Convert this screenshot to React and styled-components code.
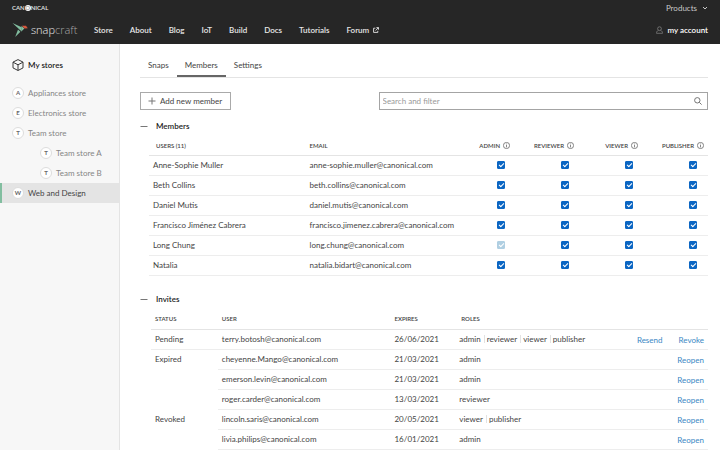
import React, { useState } from "react";
import styled, { createGlobalStyle } from "styled-components";

const colors = {
  dark: "#262626",
  text: "#444",
  muted: "#858585",
  line: "#e4e4e4",
  link: "#3a87c4",
  blue: "#0b66c3",
  green: "#82bea0",
};

const GlobalStyle = createGlobalStyle`
  * {
    box-sizing: border-box;
  }

  body {
    margin: 0;
    background: #fff;
    color: ${colors.text};
    font-family: Lato, "Open Sans", sans-serif;
    font-size: 8px;
    line-height: 12px;
  }

  a {
    color: inherit;
    text-decoration: none;
  }

  button, input {
    font: inherit;
    color: inherit;
  }

  svg {
    flex-shrink: 0;
  }
`;

const Header = styled.header`
  height: 44px;
  padding: 0 12px;
  background: ${colors.dark};
  color: #e6e6e6;
`;

const TopBar = styled.div`
  display: flex;
  align-items: center;
  justify-content: space-between;
  height: 16px;
`;

const Canonical = styled.a`
  display: flex;
  align-items: center;
  font-size: 6px;
  font-weight: 600;
`;

const CanonicalDot = styled.span`
  width: 6px;
  height: 6px;
  border-radius: 50%;
  background: #fff;
  color: #999;
  font-size: 6px;
  line-height: 6px;
  text-align: center;
`;

const ProductsButton = styled.button`
  display: flex;
  align-items: center;
  gap: 5px;
  padding: 0;
  border: none;
  background: none;
  color: #c8c8c8;
`;

const NavBar = styled.div`
  display: flex;
  align-items: center;
  height: 28px;
`;

const Logo = styled.a`
  display: flex;
  align-items: center;
  gap: 3px;
  width: 82px;
`;

const LogoText = styled.span`
  font-family: "Open Sans", "Noto Sans", sans-serif;
  font-size: 11px;
  font-weight: 300;
  color: #eee;

  span {
    color: #a8a8a8;
  }
`;

const Nav = styled.nav`
  display: flex;
  flex: 1;
  gap: 17px;
  font-weight: 600;
`;

const NavLink = styled.a`
  display: flex;
  align-items: center;
  gap: 4px;
`;

const Account = styled.a`
  display: flex;
  align-items: center;
  gap: 5px;
  font-weight: 600;
  color: #fff;
`;

const Page = styled.div`
  display: flex;
  min-height: calc(100vh - 44px);
`;

const Sidebar = styled.aside`
  flex: 0 0 120px;
  padding-top: 11px;
  border-right: 1px solid ${colors.line};
  background: #f7f7f7;
`;

const SidebarTitle = styled.a`
  display: flex;
  align-items: center;
  gap: 4px;
  height: 20px;
  margin-bottom: 8px;
  padding-left: 12px;
  font-weight: 600;
  color: #222;
`;

const StoreLink = styled.a`
  display: flex;
  align-items: center;
  gap: 4px;
  height: 20px;
  padding-left: ${({ $nested }) => ($nested ? "38px" : "10px")};
  border-left: 2px solid ${({ $active }) => ($active ? colors.green : "transparent")};
  background: ${({ $active }) => ($active ? "#e4e4e4" : "transparent")};
  color: ${({ $active }) => ($active ? colors.text : colors.muted)};
`;

const Avatar = styled.span`
  display: flex;
  align-items: center;
  justify-content: center;
  width: 12px;
  height: 12px;
  border: 1px solid #ddd;
  border-radius: 50%;
  background: #fff;
  color: #666;
  font-size: 6px;
  font-weight: 700;
`;

const Main = styled.main`
  flex: 1;
  min-width: 0;
  padding: 10px 12px 0 20px;
`;

const Tabs = styled.nav`
  display: flex;
  border-bottom: 1px solid ${colors.line};
`;

const Tab = styled.a`
  height: 23px;
  padding: 5px 8px 0;
  border-bottom: 2px solid ${({ $active }) => ($active ? "#666" : "transparent")};
`;

const Toolbar = styled.div`
  display: flex;
  justify-content: space-between;
  margin: 14px 0 10px;
`;

const AddButton = styled.button`
  display: flex;
  align-items: center;
  gap: 4px;
  height: 18px;
  padding: 0 8px 0 7px;
  border: 1px solid #aaa;
  background: #fff;
`;

const SearchBox = styled.label`
  display: flex;
  align-items: center;
  width: 58%;
  height: 18px;
  padding: 0 5px 0 3px;
  border: 1px solid #a4a4a4;

  input {
    flex: 1;
    padding: 0;
    border: none;
    outline: none;
    background: none;
  }

  input::placeholder {
    color: #999;
    opacity: 1;
  }
`;

const Section = styled.section`
  margin-bottom: 17px;
`;

const SectionHead = styled.h2`
  margin: 0;
  font-size: 8px;
  font-weight: 600;
  color: #222;
`;

const Toggle = styled.button`
  display: flex;
  align-items: center;
  gap: 8px;
  height: 12px;
  padding: 0;
  border: none;
  background: none;
`;

const Table = styled.table`
  width: calc(100% - ${({ $indent }) => $indent});
  margin-left: ${({ $indent }) => $indent};
  border-collapse: separate;
  border-spacing: 0;
  table-layout: fixed;

  th {
    height: ${({ $headHeight }) => $headHeight};
    padding: 4px 4px 0;
    border-bottom: 1px solid ${colors.line};
    font-size: 6px;
    font-weight: 600;
    text-align: left;
    white-space: nowrap;
  }

  td {
    height: 20px;
    padding: 0 4px 1px;
    border-bottom: 1px solid #ededed;
    white-space: nowrap;
  }
`;

const HeadCell = styled.th`
  width: ${({ $width }) => $width};

  && {
    padding-left: ${({ $inset }) => ($inset ? "7px" : "4px")};
  }
`;

const RoleHead = styled.th`
  width: ${({ $last }) => ($last ? "48px" : "64px")};

  div {
    display: flex;
    align-items: center;
    justify-content: flex-end;
    gap: 3px;
    padding-right: ${({ $last }) => ($last ? "0" : "18px")};
  }
`;

const RoleCell = styled.td`
  && {
    padding-right: ${({ $last }) => ($last ? "11px" : "27px")};
  }
`;

const Checkbox = styled.input`
  appearance: none;
  display: flex;
  align-items: center;
  justify-content: center;
  width: 8px;
  height: 8px;
  margin: 0 0 0 auto;
  border: 1px solid #999;
  border-radius: 1px;

  &:checked {
    border-color: ${colors.blue};
    background: ${colors.blue};
  }

  &:checked::after {
    content: "";
    width: 4px;
    height: 2px;
    margin-bottom: 1px;
    border-left: 1px solid #fff;
    border-bottom: 1px solid #fff;
    transform: rotate(-45deg);
  }

  &:disabled {
    border-color: #b0cfe2;
    background: #b0cfe2;
  }
`;

const StatusCell = styled.td`
  vertical-align: top;
  line-height: 18px;

  && {
    border-bottom-color: ${({ $open }) => ($open ? "transparent" : "#ededed")};
  }
`;

const Roles = styled.div`
  display: flex;
  align-items: center;
  margin-left: -2px;
  line-height: 8px;

  span + span {
    margin-left: 3px;
    padding-left: 2px;
    border-left: 1px solid #e2e2e2;
  }
`;

const Actions = styled.div`
  display: flex;
  justify-content: flex-end;
  gap: 16px;
  padding-top: 1px;
`;

const ActionButton = styled.button`
  padding: 0;
  border: none;
  background: none;
  color: ${colors.link};
`;

const stores = [
  { name: "Appliances store" },
  { name: "Electronics store" },
  { name: "Team store" },
  { name: "Team store A", nested: true },
  { name: "Team store B", nested: true },
  { name: "Web and Design", active: true },
];

const roleNames = ["ADMIN", "REVIEWER", "VIEWER", "PUBLISHER"];

const members = [
  { name: "Anne-Sophie Muller", email: "anne-sophie.muller@canonical.com" },
  { name: "Beth Collins", email: "beth.collins@canonical.com" },
  { name: "Daniel Mutis", email: "daniel.mutis@canonical.com" },
  { name: "Francisco Jiménez Cabrera", email: "francisco.jimenez.cabrera@canonical.com" },
  { name: "Long Chung", email: "long.chung@canonical.com", lockedAdmin: true },
  { name: "Natalia", email: "natalia.bidart@canonical.com" },
];

const invites = [
  {
    status: "Pending",
    actions: ["Resend", "Revoke"],
    users: [
      { email: "terry.botosh@canonical.com", expires: "26/06/2021", roles: ["admin", "reviewer", "viewer", "publisher"] },
    ],
  },
  {
    status: "Expired",
    actions: ["Reopen"],
    users: [
      { email: "cheyenne.Mango@canonical.com", expires: "21/03/2021", roles: ["admin"] },
      { email: "emerson.levin@canonical.com", expires: "21/03/2021", roles: ["admin"] },
      { email: "roger.carder@canonical.com", expires: "13/03/2021", roles: ["reviewer"] },
    ],
  },
  {
    status: "Revoked",
    actions: ["Reopen"],
    users: [
      { email: "lincoln.saris@canonical.com", expires: "20/05/2021", roles: ["viewer", "publisher"] },
      { email: "livia.philips@canonical.com", expires: "16/01/2021", roles: ["admin"] },
    ],
  },
];

function SnapLogo() {
  return (
    <svg width="16" height="16" viewBox="0 0 16 16" aria-hidden="true">
      <path d="M0.5 1 L9.6 5.2 L9.6 9.6 Z" fill="#82bea0" />
      <path d="M3.2 15 L6 7.6 L8.4 9.8 Z" fill="#82bea0" />
      <path d="M9.4 4 L12.4 6.6 L9.4 9.6 Z" fill="#82bea0" />
      <path d="M9.8 3.8 H14 L15.8 6.2 L12.6 6.4 Z" fill="#d5573c" />
    </svg>
  );
}

function ChevronIcon() {
  return (
    <svg width="6" height="6" viewBox="0 0 6 6" fill="none" stroke="currentColor" aria-hidden="true">
      <path d="M1 2 L3 4 L5 2" />
    </svg>
  );
}

function ExternalIcon() {
  return (
    <svg width="6" height="6" viewBox="0 0 6 6" fill="none" stroke="currentColor" strokeWidth="0.9" aria-hidden="true">
      <path d="M2.4 1.2 H0.6 V5.4 H4.8 V3.8 M3.4 0.6 H5.5 V2.7 M5.4 0.7 L2.6 3.5" />
    </svg>
  );
}

function UserIcon() {
  return (
    <svg width="7" height="8" viewBox="0 0 7 8" fill="none" stroke="#8a8a8a" strokeWidth="0.7" aria-hidden="true">
      <circle cx="3.5" cy="2.7" r="1.9" />
      <path d="M2.3 4.4 C1 5 0.6 5.8 0.5 7.3 H6.5 C6.4 5.8 6 5 4.7 4.4" />
    </svg>
  );
}

function BoxIcon() {
  return (
    <svg width="12" height="12" viewBox="0 0 12 12" fill="none" stroke="#222" strokeWidth="0.9" strokeLinejoin="round" aria-hidden="true">
      <path d="M6 0.6 L11 3.1 V8.9 L6 11.5 L1 8.9 V3.1 Z" />
      <path d="M1.2 3.3 L6 5.8 L10.8 3.3 M6 5.8 V11.2" />
    </svg>
  );
}

function PlusIcon() {
  return (
    <svg width="8" height="8" viewBox="0 0 8 8" stroke="#777" aria-hidden="true">
      <path d="M4 0.5 V7.5 M0.5 4 H7.5" />
    </svg>
  );
}

function SearchIcon() {
  return (
    <svg width="8" height="8" viewBox="0 0 8 8" fill="none" stroke="#666" strokeWidth="0.9" aria-hidden="true">
      <circle cx="3.3" cy="3.3" r="2.7" />
      <path d="M5.3 5.3 L7.6 7.6" />
    </svg>
  );
}

function MinusIcon() {
  return (
    <svg width="8" height="8" viewBox="0 0 8 8" stroke="#777" aria-hidden="true">
      <path d="M0.5 4.5 H7.5" />
    </svg>
  );
}

function InfoIcon() {
  return (
    <svg width="7" height="7" viewBox="0 0 7 7" fill="none" stroke="#555" strokeWidth="0.7" aria-hidden="true">
      <circle cx="3.5" cy="3.5" r="3.1" />
      <path d="M3.5 3 V5.4 M3.5 1.6 V2.4" />
    </svg>
  );
}

function CollapsibleSection({ title, children }) {
  const [open, setOpen] = useState(true);

  return (
    <Section>
      <SectionHead>
        <Toggle aria-expanded={open} onClick={() => setOpen(!open)}>
          <MinusIcon />
          {title}
        </Toggle>
      </SectionHead>
      {open && children}
    </Section>
  );
}

function MembersTable() {
  return (
    <Table $indent="9px" $headHeight="24px">
      <thead>
        <tr>
          <HeadCell $width="28%" $inset>USERS (11)</HeadCell>
          <th>EMAIL</th>
          {roleNames.map((role, i) => (
            <RoleHead key={role} $last={i === 3}>
              <div>{role}<InfoIcon /></div>
            </RoleHead>
          ))}
        </tr>
      </thead>
      <tbody>
        {members.map((member) => (
          <tr key={member.email}>
            <td>{member.name}</td>
            <td>{member.email}</td>
            {roleNames.map((role, i) => (
              <RoleCell key={role} $last={i === 3}>
                <Checkbox
                  type="checkbox"
                  defaultChecked
                  disabled={i === 0 && member.lockedAdmin}
                  aria-label={`${member.name} ${role.toLowerCase()}`}
                />
              </RoleCell>
            ))}
          </tr>
        ))}
      </tbody>
    </Table>
  );
}

function InvitesTable() {
  return (
    <Table $indent="11px" $headHeight="25px">
      <thead>
        <tr>
          <HeadCell $width="12%">STATUS</HeadCell>
          <HeadCell $width="31%">USER</HeadCell>
          <HeadCell $width="12%">EXPIRES</HeadCell>
          <HeadCell $width="28%">ROLES</HeadCell>
          <th aria-label="Actions" />
        </tr>
      </thead>
      <tbody>
        {invites.map((group) =>
          group.users.map((user, i) => (
            <tr key={user.email}>
              {i === 0 && (
                <StatusCell rowSpan={group.users.length} $open={group.status !== "Pending"}>
                  {group.status}
                </StatusCell>
              )}
              <td>{user.email}</td>
              <td>{user.expires}</td>
              <td>
                <Roles>
                  {user.roles.map((role) => <span key={role}>{role}</span>)}
                </Roles>
              </td>
              <td>
                <Actions>
                  {group.actions.map((action) => <ActionButton key={action}>{action}</ActionButton>)}
                </Actions>
              </td>
            </tr>
          ))
        )}
      </tbody>
    </Table>
  );
}

function App() {
  return (
    <>
      <GlobalStyle />
      <Header>
        <TopBar>
          <Canonical href="#">CAN<CanonicalDot>O</CanonicalDot>NICAL</Canonical>
          <ProductsButton>Products<ChevronIcon /></ProductsButton>
        </TopBar>
        <NavBar>
          <Logo href="#">
            <SnapLogo />
            <LogoText>snap<span>craft</span></LogoText>
          </Logo>
          <Nav>
            {["Store", "About", "Blog", "IoT", "Build", "Docs", "Tutorials"].map((item) => (
              <NavLink key={item} href="#">{item}</NavLink>
            ))}
            <NavLink href="#">Forum<ExternalIcon /></NavLink>
          </Nav>
          <Account href="#"><UserIcon />my account</Account>
        </NavBar>
      </Header>
      <Page>
        <Sidebar>
          <SidebarTitle href="#"><BoxIcon />My stores</SidebarTitle>
          {stores.map((store) => (
            <StoreLink key={store.name} href="#" $nested={store.nested} $active={store.active}>
              <Avatar>{store.name[0]}</Avatar>
              {store.name}
            </StoreLink>
          ))}
        </Sidebar>
        <Main>
          <Tabs>
            <Tab href="#">Snaps</Tab>
            <Tab href="#" $active>Members</Tab>
            <Tab href="#">Settings</Tab>
          </Tabs>
          <Toolbar>
            <AddButton><PlusIcon />Add new member</AddButton>
            <SearchBox>
              <input type="text" placeholder="Search and filter" aria-label="Search and filter" />
              <SearchIcon />
            </SearchBox>
          </Toolbar>
          <CollapsibleSection title="Members">
            <MembersTable />
          </CollapsibleSection>
          <CollapsibleSection title="Invites">
            <InvitesTable />
          </CollapsibleSection>
        </Main>
      </Page>
    </>
  );
}

export default App;
